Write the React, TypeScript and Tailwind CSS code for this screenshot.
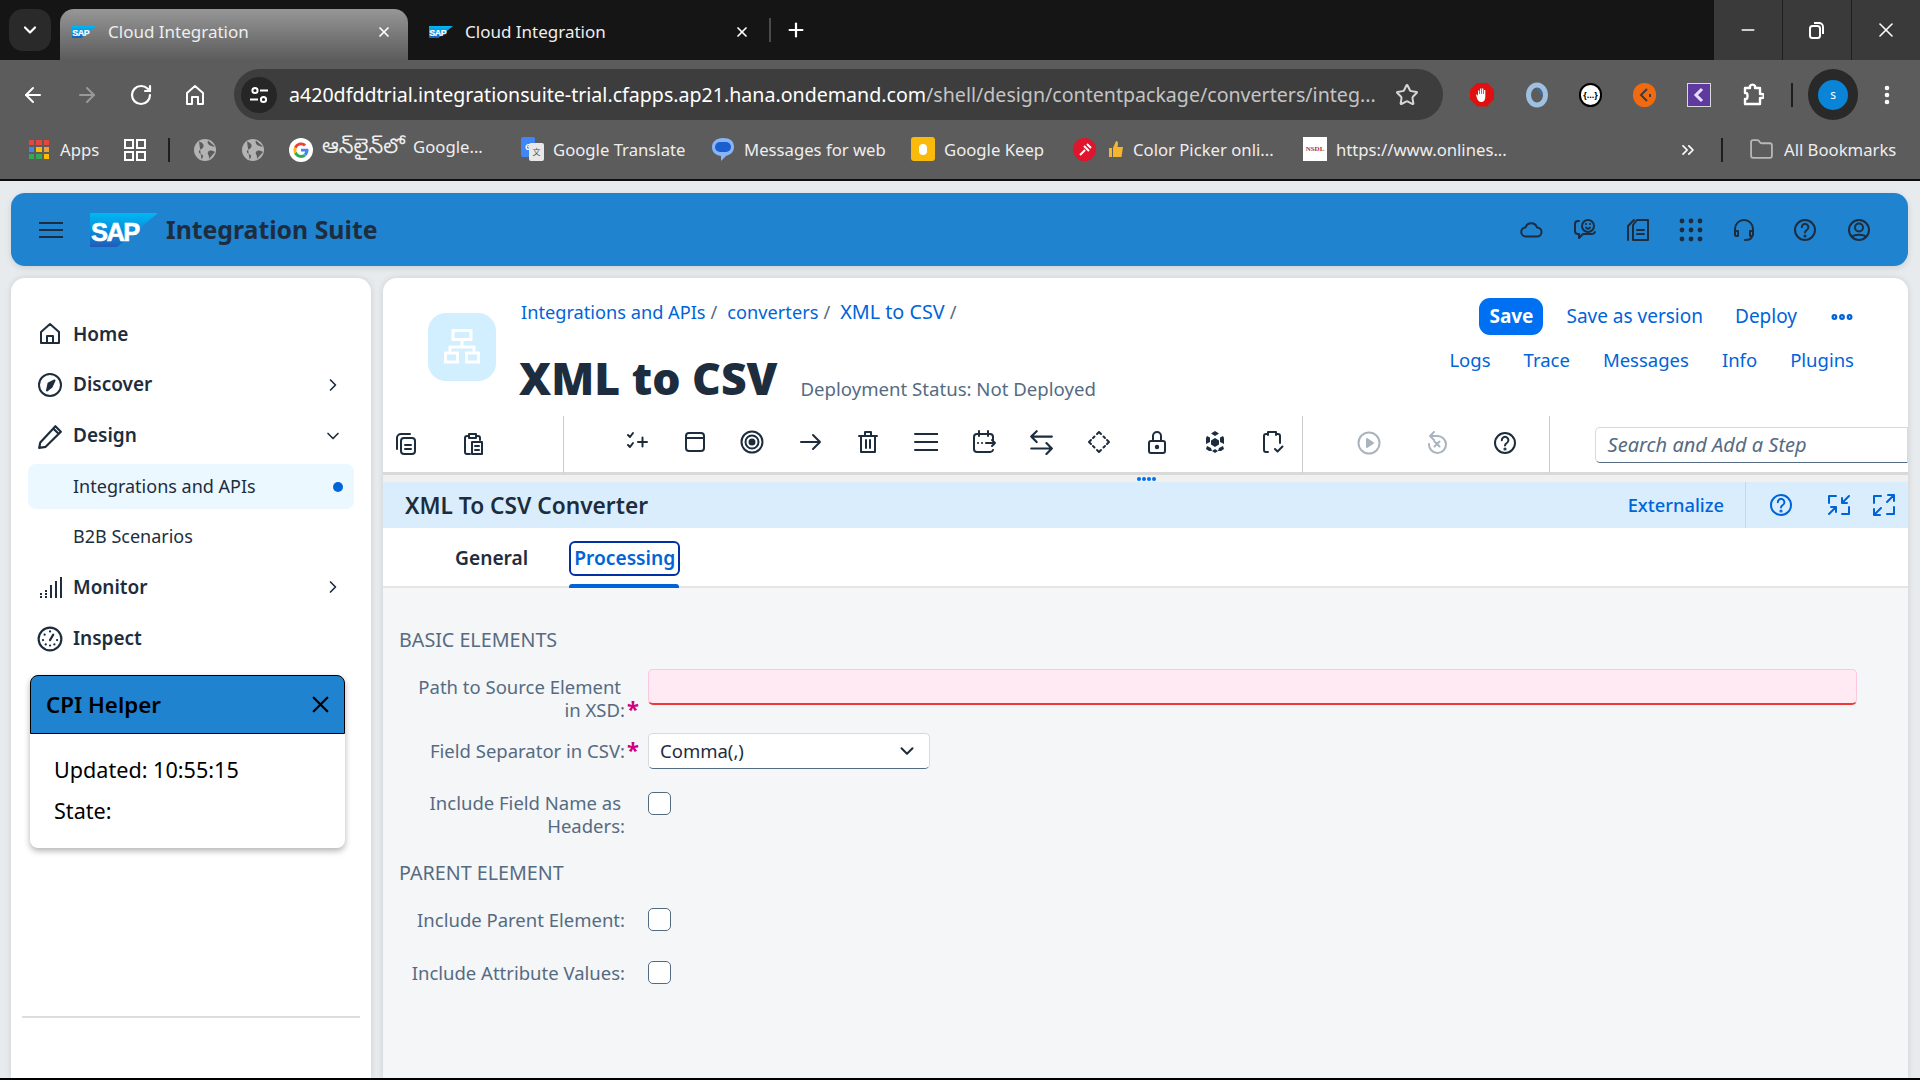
import React from "react";
import { ArrowLeft, ArrowRight, RotateCw, Star, ChevronDown, ChevronRight, X, Plus, Minus, ChevronsRight, Folder, EllipsisVertical, Ellipsis } from "lucide-react";

type P = { c?: string; s?: number; w?: number; children?: React.ReactNode };
const Ic = ({ c = "#1d2d3e", s = 24, w = 2, children }: P) => (
  <svg width={s} height={s} viewBox="0 0 24 24" fill="none" stroke={c} strokeWidth={w} strokeLinecap="round" strokeLinejoin="round" className="shrink-0">{children}</svg>
);

const SapLogo = ({ w = 68, h = 34 }: { w?: number; h?: number }) => (
  <svg width={w} height={h} viewBox="0 0 68 34" className="shrink-0">
    <defs><linearGradient id="sapg" x1="0" y1="0" x2="0" y2="1"><stop offset="0" stopColor="#00b8f1" /><stop offset="0.5" stopColor="#0a8fe0" /><stop offset="1" stopColor="#1e5cb8" /></linearGradient></defs>
    <polygon points="0,0 68,0 27,34 0,34" fill="url(#sapg)" />
    <text x="1" y="28" fontFamily="Liberation Sans" fontWeight="700" fontSize="25.5" letterSpacing="-1.6" fill="#fff" stroke="#fff" strokeWidth="0.6">SAP</text>
  </svg>
);

const Help = ({ c, s = 24 }: { c?: string; s?: number }) => (
  <Ic c={c} s={s}><circle cx="12" cy="12" r="10" /><path d="M8.8 9.2a3.3 3.3 0 1 1 5 2.8c-1.2.8-1.8 1.4-1.8 2.6" /><circle cx="12" cy="18" r=".6" fill={c || "#1d2d3e"} /></Ic>
);

const Tab = ({ active, width }: { active?: boolean; width: string }) => (
  <div className={`flex items-center h-[51px] rounded-t-[14px] pl-3 pb-[6px] ${width} ${active ? "bg-gradient-to-b from-[#979797] to-[#5c5c5c]" : ""}`}>
    <SapLogo w={24} h={12} />
    <span className="ml-3 text-[17px] text-[#eeeeee] flex-1 whitespace-nowrap">Cloud Integration</span>
    <X size={16} color="#fff" strokeWidth={2.6} />
  </div>
);

const Bm = ({ icon, text, w }: { icon: React.ReactNode; text: React.ReactNode; w: string }) => (
  <div className={`flex items-center shrink-0 ${w}`}>
    {icon}
    <span className="ml-[9px] text-[16.7px] text-[#eeeeee] whitespace-nowrap">{text}</span>
  </div>
);

const Globe = () => (
  <svg width="22" height="22" viewBox="0 0 22 22" className="shrink-0">
    <circle cx="11" cy="11" r="11" fill="#b3b3b3" />
    <path d="M5 2.5c3 1 5 2.5 4.5 5S6 10 5 12s2 3 3.5 4-.5 4-1 4.5M14 1.5c-1 2 0 4 2 5s4 1 5 1M21 13c-3-2-6-2-7 0s1 3 1 5 0 2-1 3" fill="#5c5c5c" />
  </svg>
);

function Browser() {
  return (
    <div className="shrink-0">
      <div className="h-[60px] bg-[#151515] flex items-end">
        <div className="w-[42px] h-[42px] ml-[9px] mb-[9px] bg-[#2a2a2a] rounded-[14px] flex items-center justify-center">
          <ChevronDown size={20} color="#fff" strokeWidth={2.6} />
        </div>
        <div className="ml-[9px]"><Tab active width="w-[348px] pr-[16px]" /></div>
        <div className="ml-[9px]"><Tab width="w-[346px] pr-[13px]" /></div>
        <div className="w-[2px] h-[24px] bg-[#4a4a4a] mb-[18px] ml-[6px]" />
        <div className="ml-[14px] mb-[19px]"><Plus size={22} color="#fff" strokeWidth={2.4} /></div>
        <div className="ml-auto w-[206px] h-[60px] bg-[#3a3a3a] flex">
          <div className="flex-1 flex items-center justify-center border-r border-[#1f1f1f]"><Minus size={20} color="#fff" strokeWidth={1.8} /></div>
          <div className="flex-1 flex items-center justify-center border-r border-[#1f1f1f]">
            <svg width="18" height="20" viewBox="0 0 18 20" fill="none" stroke="#fff" strokeWidth="2"><rect x="2" y="6" width="10" height="12" rx="2.5" /><path d="M6 3h5a4 4 0 0 1 4 4v7" /></svg>
          </div>
          <div className="flex-1 flex items-center justify-center"><X size={24} color="#fff" strokeWidth={1.6} /></div>
        </div>
      </div>
      <div className="h-[60px] bg-[#5c5c5c] flex items-end">
        <div className="h-[51px] w-[234px] flex items-center pl-[21px] gap-[30px]">
          <ArrowLeft size={24} color="#fff" strokeWidth={2} />
          <ArrowRight size={24} color="#999" strokeWidth={2} />
          <RotateCw size={24} color="#fff" strokeWidth={2.2} />
          <svg width="24" height="24" viewBox="0 0 24 24" fill="none" stroke="#fff" strokeWidth="2" strokeLinejoin="round"><path d="M4 21V10l8-7 8 7v11h-5v-7H9v7z" /></svg>
        </div>
        <div className="w-[1209px] h-[51px] bg-[#3d3d3d] rounded-full flex items-center pl-[7px] pr-[24px]">
          <div className="w-[36px] h-[36px] rounded-full bg-[#262626] flex items-center justify-center shrink-0">
            <svg width="20" height="20" viewBox="0 0 20 20" fill="none" stroke="#fff" strokeWidth="2"><circle cx="6" cy="5.5" r="2.6" /><path d="M11 5.500h8M1 14.500h8" /><circle cx="14.500" cy="14.500" r="2.600" /></svg>
          </div>
          <span className="ml-3 text-[19.6px] text-white whitespace-nowrap flex-1 min-w-0">a420dfddtrial.integrationsuite-trial.cfapps.ap21.hana.ondemand.com<span className="text-[#c4c4c4]">/shell/design/contentpackage/converters/integ...</span></span>
          <Star size={24} color="#d6d6d6" strokeWidth={2} className="ml-4 shrink-0" />
        </div>
        <div className="flex-1 h-[51px] flex items-center relative">
          <div className="ml-[27px] w-[24px] h-[24px] bg-[#e01010] [clip-path:polygon(30%_0,70%_0,100%_30%,100%_70%,70%_100%,30%_100%,0_70%,0_30%)] flex items-center justify-center">
            <svg width="14" height="16" viewBox="0 0 14 16"><path d="M3 9V3.500h1.300V7h.7V1.500h1.300V7h.7V1.500h1.300V7h.7V3h1.300v7c0 3-1.500 5-4 5-2 0-3-1-4-3L1 8c1-1 1.500 0 2 1z" fill="#fff" /></svg>
          </div>
          <svg className="ml-[31px]" width="24" height="26" viewBox="0 0 24 26" fill="none"><ellipse cx="12" cy="13" rx="8.500" ry="10" stroke="#9fc0e0" strokeWidth="5" /><path d="M12 7c3 0 4.500 3 4 6" stroke="#3a6ea5" strokeWidth="2" /></svg>
          <div className="ml-[30px] w-[23px] h-[24px] rounded-full bg-white border-2 border-black flex items-center justify-center text-[9px] font-bold text-black leading-none">{"{...}"}</div>
          <div className="ml-[31px] w-[23px] h-[24px] rounded-full bg-[#f26a0f] flex items-center justify-center">
            <svg width="14" height="16" viewBox="0 0 14 16" fill="none" stroke="#3d3d3d" strokeWidth="2"><path d="M9 2L3 8l6 6M12 7v3" /></svg>
          </div>
          <div className="ml-[31px] w-[24px] h-[24px] bg-[#5e3a9e] border border-[#d8d8d8] flex items-center justify-center">
            <svg width="14" height="18" viewBox="0 0 14 18" fill="none" stroke="#e8dcff" strokeWidth="3"><path d="M10 3L4 9l6 6" /></svg>
          </div>
          <svg className="ml-[31px]" width="22" height="26" viewBox="0 0 22 26" fill="none" stroke="#fff" strokeWidth="2.400" strokeLinejoin="round"><path d="M3 6h5V4a3 3 0 0 1 5 0v2h5v6h2a2 2 0 0 1 0 4h-2v6H3v-5h1c2 0 2-6 0-6H3z" /></svg>
          <div className="ml-[27px] w-[2px] h-[24px] bg-[#1e1e1e]" />
          <div className="ml-[15px] w-[50px] h-[51px] rounded-full bg-[#292929] flex items-center justify-center">
            <div className="w-[30px] h-[30px] rounded-full bg-[#0a84d6] text-white text-[12px] flex items-center justify-center">s</div>
          </div>
          <EllipsisVertical className="ml-[17px]" size={24} color="#fff" strokeWidth={2.6} />
        </div>
      </div>
      <div className="h-[61px] bg-[#5c5c5c] flex items-center border-b-2 border-[#0d0d0d]">
        <div className="ml-[29px] w-[20px] grid grid-cols-3 gap-[2px] shrink-0">
          {["#e8453c", "#e8453c", "#e8453c", "#4285f4", "#fbbc05", "#e8a33c", "#34a853", "#34a853", "#fbbc05"].map((c, i) => <div key={i} className="h-[5px]" style={{ background: c }} />)}
        </div>
        <span className="ml-[11px] w-[38px] text-[16.7px] text-[#eeeeee]">Apps</span>
        <svg className="ml-[26px]" width="22" height="22" viewBox="0 0 22 22" fill="none" stroke="#fff" strokeWidth="2"><rect x="1" y="1" width="8" height="8" /><rect x="13" y="1" width="8" height="8" /><rect x="1" y="13" width="8" height="8" /><rect x="13" y="13" width="8" height="8" /></svg>
        <div className="ml-[22px] w-[2px] h-[24px] bg-[#1e1e1e]" />
        <div className="ml-[24px]"><Globe /></div>
        <div className="ml-[26px] mr-[25px]"><Globe /></div>
        <Bm w="w-[232px]" text={<><span className="text-[21px] mr-[4px]" style={{ fontFamily: "'Noto Sans Telugu','Noto Sans',sans-serif" }}>ఆన్‌లైన్‌లో</span> Google...</>} icon={
          <svg width="24" height="24" viewBox="0 0 24 24" className="shrink-0"><circle cx="12" cy="12" r="12" fill="#fff" /><path d="M19.500 12.300c0-.6 0-1-.2-1.500H12v2.800h4.200a3.600 3.600 0 0 1-1.500 2.300l2.400 1.900c1.500-1.300 2.400-3.300 2.400-5.500z" fill="#4285f4" /><path d="M12 20c2.100 0 3.900-.7 5.100-1.900l-2.400-1.900c-.7.500-1.600.7-2.700.7-2.100 0-3.800-1.400-4.400-3.200l-2.500 1.900C6.400 18.300 9 20 12 20z" fill="#34a853" /><path d="M7.600 13.700a4.800 4.800 0 0 1 0-3.100L5.100 8.700a8 8 0 0 0 0 7z" fill="#fbbc05" /><path d="M12 7.200c1.200 0 2.200.4 3 1.200l2.200-2.200A8 8 0 0 0 5.100 8.700l2.500 1.900C8.200 8.700 9.900 7.200 12 7.200z" fill="#ea4335" /></svg>
        } />
        <Bm w="w-[190px]" text="Google Translate" icon={
          <div className="relative w-[23px] h-[24px] shrink-0">
            <div className="absolute left-0 top-0 w-[14px] h-[20px] bg-[#4285f4] rounded-[2px] text-white text-[8px] font-bold flex items-center justify-center">G</div>
            <div className="absolute right-0 bottom-0 w-[15px] h-[18px] bg-[#e8e8e8] rounded-[2px] text-[#555] text-[8px] flex items-center justify-center" style={{ fontFamily: "'Noto Sans CJK SC',sans-serif" }}>文</div>
          </div>
        } />
        <Bm w="w-[200px]" text="Messages for web" icon={
          <svg width="24" height="24" viewBox="0 0 24 24" className="shrink-0"><path d="M12 1c7 0 11 3 11 9s-5 8-8 9l-5 5v-5C4 18 1 15 1 10s4-9 11-9z" fill="#8ab4f8" /><rect x="4" y="5" width="16" height="10" rx="5" fill="#1a5fd0" /></svg>
        } />
        <Bm w="w-[162px]" text="Google Keep" icon={
          <div className="w-[24px] h-[24px] bg-[#f9ba0b] rounded-[3px] flex items-center justify-center shrink-0"><div className="w-[8px] h-[11px] rounded-full bg-white" /></div>
        } />
        <div className="mr-[12px] w-[23px] h-[23px] rounded-full bg-[#e0142c] flex items-center justify-center shrink-0">
          <svg width="14" height="14" viewBox="0 0 14 14" fill="none" stroke="#fff" strokeWidth="2"><path d="M2 12l5-5M6 3l5 5M9 1l4 4" /></svg>
        </div>
        <Bm w="w-[195px]" text="Color Picker onli..." icon={
          <svg width="16" height="20" viewBox="0 0 16 20" className="shrink-0"><path d="M1 9h3v9H1zM5 9l3-7c2 0 2 2 2 3l-.5 3H15l-1.500 10H5z" fill="#f5b52e" /></svg>
        } />
        <Bm w="w-[375px]" text="https://www.onlines..." icon={
          <div className="w-[24px] h-[24px] bg-white flex items-center justify-center text-[7px] font-bold text-[#a33] shrink-0" style={{ fontFamily: "'Liberation Serif',serif" }}>NSDL</div>
        } />
        <ChevronsRight size={20} color="#fff" strokeWidth={2} />
        <div className="ml-[23px] w-[2px] h-[24px] bg-[#1e1e1e]" />
        <Folder className="ml-[26px]" size={25} color="#b8b8b8" strokeWidth={1.700} />
        <span className="ml-[10px] text-[16.7px] text-[#eeeeee] whitespace-nowrap">All Bookmarks</span>
      </div>
    </div>
  );
}

const Shell = () => (
  <div className="h-[73px] mx-[11px] mt-[12px] shrink-0 w-[1897px] bg-[#2083cf] rounded-[14px] flex items-center shadow-[0_2px_6px_rgba(0,0,0,0.12)]">
    <svg className="ml-[28px]" width="24" height="18" viewBox="0 0 24 18" stroke="#1d2d3e" strokeWidth="2"><path d="M0 2h24M0 9h24M0 16h24" /></svg>
    <div className="ml-[27px]"><SapLogo /></div>
    <span className="ml-[8px] text-[24.8px] font-bold text-[#1d2d3e] whitespace-nowrap">Integration Suite</span>
    <div className="ml-auto flex items-center">
      <div className="w-[24px] flex justify-center"><Ic s={24}><path d="M7 18.500a4.500 4.500 0 0 1-.5-9A6 6 0 0 1 18 9.500a4.500 4.500 0 0 1 0 9z" /></Ic></div>
      <div className="ml-[30px]"><Ic s={24}><circle cx="15" cy="8" r="6" /><path d="M13 9.500c1 1.500 3 1.500 4 0M13 6h.1M17 6h.1M6 3H5a3 3 0 0 0-3 3v7a3 3 0 0 0 3 3h1v4l4-4h8a4 4 0 0 0 4-2" /></Ic></div>
      <div className="ml-[29px]"><Ic s={24}><path d="M2 22V8l6-6M7 22h15V2H11L7 7zM11 12h7M11 16h7" /></Ic></div>
      <div className="ml-[29px]"><svg width="24" height="24" viewBox="0 0 24 24" fill="#1d2d3e">{[3, 12, 21].flatMap((y) => [3, 12, 21].map((x) => <circle key={x + "-" + y} cx={x} cy={y} r="2.400" />))}</svg></div>
      <div className="ml-[29px]"><Ic s={24}><path d="M3 13V11a9 9 0 0 1 18 0v2M3 13h3v5H4a1 1 0 0 1-1-1zM21 13h-3v5h2a1 1 0 0 0 1-1zM20 18c0 3-3 4-7 4" /></Ic></div>
      <div className="ml-[37px]"><Help /></div>
      <div className="ml-[30px] mr-[37px]"><Ic s={24}><circle cx="12" cy="12" r="10" /><circle cx="12" cy="9.500" r="4" /><path d="M5 19c2-3 12-3 14 0" /></Ic></div>
    </div>
  </div>
);

const NavItem = ({ icon, text, chev, h = "h-[51px]" }: { icon?: React.ReactNode; text: string; chev?: "r" | "d"; h?: string }) => (
  <div className={`flex items-center shrink-0 ${h} pl-[26px] pr-[28px]`}>
    <div className="w-[26px] flex justify-center shrink-0">{icon}</div>
    <span className="ml-[10px] text-[19px] font-semibold text-[#1d2d3e]">{text}</span>
    {chev === "r" && <ChevronRight className="ml-auto" size={20} color="#1d2d3e" strokeWidth={2} />}
    {chev === "d" && <ChevronDown className="ml-auto" size={20} color="#1d2d3e" strokeWidth={2} />}
  </div>
);

function Side() {
  return (
    <div className="w-[360px] h-[800px] shrink-0 bg-white rounded-t-[14px] flex flex-col pt-[31px] shadow-[0_0_6px_rgba(0,0,0,0.12)]">
      <NavItem text="Home" h="h-[50px]" icon={<Ic><path d="M3 21V10l9-8 9 8v11zM9 21v-7h6v7" /></Ic>} />
      <NavItem text="Discover" chev="r" icon={<Ic><circle cx="12" cy="12" r="11" /><path d="M16.500 7.500L13.500 14 9 17.500 10.500 10.500z" fill="#1d2d3e" /></Ic>} />
      <NavItem text="Design" chev="d" h="h-[51px]" icon={<Ic s={26}><path d="M2 23l1-5L17 3l5 5L8 22zM15 5l4 4" /></Ic>} />
      <div className="mt-[3px] mx-[17px] h-[45px] shrink-0 bg-[#ebf8ff] rounded-[8px] flex items-center pl-[45px] pr-[11px]">
        <span className="text-[18px] text-[#1d2d3e]">Integrations and APIs</span>
        <div className="ml-auto w-[10px] h-[10px] rounded-full bg-[#0064d9]" />
      </div>
      <div className="h-[55px] shrink-0 pl-[62px] flex items-center"><span className="text-[18px] text-[#1d2d3e]">B2B Scenarios</span></div>
      <NavItem text="Monitor" chev="r" h="h-[46px]" icon={
        <svg width="24" height="24" viewBox="0 0 24 24" stroke="#1d2d3e" strokeWidth="2" fill="none"><path d="M23 2v21M18 6v17M13 10v13" /><path d="M2 22h2M2 19h2M7 22h2M7 19h2M7 16h2" /></svg>
      } />
      <div className="h-[8px] shrink-0" />
      <NavItem text="Inspect" h="h-[41px]" icon={<Ic s={26}><circle cx="12" cy="12" r="10.500" /><path d="M12 13l3-5M7 8h.1M5.500 13h.1M18.500 13h.1M8 17h.1M12 18h.1M16 17h.1M12 5h.1" /></Ic>} />
      <div className="mt-[16px] mx-[19px] w-[315px] h-[173px] shrink-0 bg-white rounded-[8px] shadow-[0_3px_6px_rgba(0,0,0,0.3)] text-black">
        <div className="h-[59px] bg-[#2083cf] border border-black rounded-t-[8px] flex items-center pl-[15px] pr-[10px] text-[22.3px] font-semibold">
          CPI Helper
          <X className="ml-auto" size={27} color="#000" strokeWidth={2} />
        </div>
        <div className="pl-[24px] pt-[15px] text-[21.6px] leading-[41px]">
          <div>Updated: 10:55:15</div>
          <div>State:</div>
        </div>
      </div>
      <div className="mt-[168px] mx-[11px] h-[2px] bg-[#dddddd] shrink-0" />
    </div>
  );
}

const TB = ({ children, w = "w-[57.8px]" }: { children: React.ReactNode; w?: string }) => (
  <div className={`${w} flex justify-center shrink-0`}>{children}</div>
);
const Gray = "#a9b4be";

function Toolbar() {
  return (
    <div className="h-[59px] flex items-center border-b-[3px] border-[#d9d9d9] shrink-0">
      <div className="ml-[11px] w-[169px] flex items-center h-full gap-[43px]">
        <Ic s={24}><path d="M3 17V6a4 4 0 0 1 4-4h9" /><rect x="7" y="6" width="14" height="16" rx="3" /><path d="M11 13h6M11 17h6" /></Ic>
        <Ic s={24}><path d="M9 22H6a2 2 0 0 1-2-2V6a2 2 0 0 1 2-2h2M8 2h7v4H8zM15 4h2a2 2 0 0 1 2 2v2" /><rect x="11" y="10" width="10" height="12" /><path d="M14 14h4M14 18h4" /></Ic>
      </div>
      <div className="w-px h-[57px] bg-[#cccccc]" />
      <div className="flex items-center ml-[44px] pb-[5px]">
        <TB><Ic s={24}><path d="M3 5l2 2 3-4M3 15l2 2 3-4M13 12h9M17.500 7.500v9" /></Ic></TB>
        <TB><Ic s={24}><rect x="3" y="3" width="18" height="18" rx="3" /><path d="M3 8h18" /></Ic></TB>
        <TB><Ic s={24}><circle cx="12" cy="12" r="10.500" /><circle cx="12" cy="12" r="6.500" /><circle cx="12" cy="12" r="2.500" fill="#1d2d3e" /></Ic></TB>
        <TB><Ic s={24}><path d="M3 12h19M15 5l7 7-7 7" /></Ic></TB>
        <TB><Ic s={24}><path d="M3 6h18M9 6V2h6v4M5 6v16h14V6M10 10v8M14 10v8" /></Ic></TB>
        <TB><Ic s={24}><path d="M1 4h23M1 12h23M1 20h23" /></Ic></TB>
        <TB><Ic s={24}><path d="M21 12V7a3 3 0 0 0-3-3H5a3 3 0 0 0-3 3v12a3 3 0 0 0 3 3h13a3 3 0 0 0 3-2M7 1v5M16 1v5M6 13h.1M10 13h.1M14 13h9M20 10l3 3-3 3" /></Ic></TB>
        <TB><Ic s={26}><path d="M22 7H3M8 2L3 7l5 5M3 18h19M17 13l5 5-5 5" /></Ic></TB>
        <TB><Ic s={24}><path d="M10 4l2-2 2 2M20 10l2 2-2 2M14 20l-2 2-2-2M4 14l-2-2 2-2M6 8l1.500-1.500M16.500 6.500L18 8M18 16l-1.500 1.500M7.500 17.500L6 16" /></Ic></TB>
        <TB><Ic s={24}><rect x="4" y="11" width="16" height="12" rx="2" /><path d="M8 11V6a4 4 0 0 1 8 0v5" /><circle cx="12" cy="17" r="1.200" fill="#1d2d3e" /></Ic></TB>
        <TB><svg width="24" height="24" viewBox="0 0 24 24" fill="#1d2d3e"><path d="M12 1l4 2.500-4 2.500-4-2.500zM4 6l3 1.500V12l-4 2V8zM20 6l-3 1.500V12l4 2V8zM12 8l4 2.500v4L12 17l-4-2.500v-4zM4 16l4 2 1 3-3 0-3-2zM20 16l-4 2-1 3 3 0 3-2zM12 19l3 2-3 2-3-2z" /></svg></TB>
        <TB><Ic s={24}><path d="M7 22H5a2 2 0 0 1-2-2V6a2 2 0 0 1 2-2h2M7 5V2h8v3M15 4h2a2 2 0 0 1 2 2v7M14 19l2.500 2.500 5-5" /></Ic></TB>
      </div>
      <div className="w-px h-[57px] bg-[#cccccc]" />
      <div className="flex items-center ml-[37px] pb-[2px]">
        <TB w="w-[58px]"><Ic c={Gray} s={24}><circle cx="12" cy="12" r="10.500" /><path d="M10 8l6 4-6 4z" fill={Gray} /></Ic></TB>
        <TB w="w-[78px]"><Ic c={Gray} s={24}><path d="M9 1L5 5l4 4M5 5h7a8.500 8.500 0 1 1-8 8M9.500 10.500l5 5M14.500 10.500l-5 5" /></Ic></TB>
        <TB w="w-[58px]"><Help s={24} /></TB>
      </div>
      <div className="ml-[15px] w-px h-[57px] bg-[#cccccc]" />
      <div className="ml-[45px] mt-[2px] flex-1 h-[36px] bg-white border border-[#d5dadd] border-b-[#556b82] rounded-l-[5px] flex items-center pl-[12px] text-[20px] italic text-[#556b82]">Search and Add a Step</div>
    </div>
  );
}

const Label = ({ children, req }: { children: React.ReactNode; req?: boolean }) => (
  <div className="w-[249px] shrink-0 pr-[23px] text-right text-[18.500px] leading-[23px] text-[#556b82]">
    {children}{req ? <span className="text-[#d0007e] font-bold text-[22px] leading-[20px] absolute ml-[2px]">*</span> : null}
  </div>
);
const Check = () => <div className="w-[23px] h-[23px] rounded-[5px] bg-white border border-[#556b82]" />;
const Link = ({ children, cls }: { children: React.ReactNode; cls?: string }) => <span className={`text-[#0064d9] whitespace-nowrap ${cls || ""}`}>{children}</span>;

function Main() {
  return (
    <div className="w-[1525px] h-[800px] shrink-0 bg-white rounded-t-[14px] flex flex-col overflow-hidden shadow-[0_0_6px_rgba(0,0,0,0.12)]">
      <div className="h-[138px] flex relative shrink-0">
        <div className="ml-[45px] mt-[35px] w-[68px] h-[68px] rounded-[18px] bg-[#d1efff] flex items-center justify-center">
          <svg width="36" height="36" viewBox="0 0 36 36" fill="none" stroke="#fff" strokeWidth="3"><rect x="9" y="1.500" width="18" height="9" /><path d="M18 11v7M6 24v-6h24v6" /><rect x="1.500" y="24" width="12" height="9" /><rect x="22.500" y="24" width="12" height="9" /></svg>
        </div>
        <div className="ml-[25px] flex flex-col">
          <div className="mt-[21px] flex text-[18.2px] text-[#556b82] leading-[26px] whitespace-nowrap">
            <Link>Integrations and APIs</Link><span className="ml-[5px]">/</span>
            <Link cls="ml-[10px]">converters</Link><span className="ml-[5px]">/</span>
            <Link cls="ml-[10px] text-[19.8px]">XML to CSV</Link><span className="ml-[5px]">/</span>
          </div>
          <div className="mt-[24px] flex items-end whitespace-nowrap">
            <span className="text-[44.5px] font-black leading-[58px] text-[#1d2d3e] ml-[-2px]">XML to CSV</span>
            <span className="ml-[23px] text-[18.6px] leading-[26px] mb-[5px] text-[#556b82]">Deployment Status: Not Deployed</span>
          </div>
        </div>
        <div className="ml-auto pr-[54px] pt-[20px] flex flex-col items-end text-[18.500px]">
          <div className="flex items-center h-[37px] text-[19px]">
            <div className="w-[64px] h-[37px] rounded-[11px] bg-[#0070f2] text-white font-bold flex items-center justify-center">Save</div>
            <Link cls="ml-[23px]">Save as version</Link>
            <Link cls="ml-[32px]">Deploy</Link>
            <Ellipsis className="ml-[32px] mr-[-1px]" size={26} color="#0064d9" strokeWidth={3.400} />
          </div>
          <div className="flex items-center mt-[12px] h-[26px]">
            <Link>Logs</Link><Link cls="ml-[33px]">Trace</Link><Link cls="ml-[33px]">Messages</Link><Link cls="ml-[33px]">Info</Link><Link cls="ml-[33px]">Plugins</Link>
          </div>
        </div>
      </div>
      <Toolbar />
      <div className="h-[7px] bg-[#f0f0f0] relative shrink-0 flex justify-center">
        <div className="absolute left-[754px] top-[2px] flex gap-[1px]">
          {[0, 1, 2, 3].map((i) => <div key={i} className="w-[4px] h-[4px] rounded-full bg-[#0070f2]" />)}
        </div>
      </div>
      <div className="h-[46px] bg-[#d9edfd] flex items-center pl-[22px] shrink-0">
        <span className="text-[22.7px] font-semibold text-[#1d2d3e] pt-[2px]">XML To CSV Converter</span>
        <div className="ml-auto flex items-center">
          <Link cls="text-[18.3px] font-medium">Externalize</Link>
          <div className="ml-[21px] w-px h-[46px] bg-[#c5d8e8]" />
          <div className="ml-[23px]"><Help c="#0064d9" s={24} /></div>
          <div className="ml-[34px]"><Ic c="#0064d9" s={24}><path d="M2 10V3h7M22 14v7h-7M22 3l-7 7M15 5v5h5M2 21l7-7M9 19v-5H4" /></Ic></div>
          <div className="ml-[21px] mr-[12px]"><Ic c="#0064d9" s={24}><path d="M2 10V3h7M22 14v7h-7M22 2l-7 7M16 2h6v6M2 22l7-7M2 16v6h6" /></Ic></div>
        </div>
      </div>
      <div className="h-[60px] bg-white border-b-2 border-[#e5e5e5] flex shrink-0 relative pl-[72px]">
        <span className="text-[19.2px] font-semibold text-[#1d2d3e] leading-[60px]">General</span>
        <div className="ml-[41px] relative h-full">
          <div className="mt-[13px] h-[35px] w-[111px] rounded-[6px] border-2 border-[#0032a5] flex items-center justify-center text-[19.2px] font-semibold text-[#0064d9]">Processing</div>
          <div className="absolute left-0 bottom-[-2px] w-[110px] h-[4px] bg-[#0064d9] rounded-t-[3px]" />
        </div>
      </div>
      <div className="flex-1 bg-[#f5f6f7] pl-[16px] pr-[51px]">
        <div className="mt-[39px] h-[26px] leading-[26px] text-[19.7px] text-[#556b82]">BASIC ELEMENTS</div>
        <div className="mt-[16px] flex items-start relative">
          <div className="pt-[6px] pb-[1px]"><Label req><span className="pr-[4px]">Path to Source Element</span><br />in XSD:</Label></div>
          <div className="flex-1 h-[36px] bg-[#ffeaf4] border border-[#fbc8dd] border-b-2 border-b-[#ee3939] rounded-[5px]" />
        </div>
        <div className="mt-[11px] flex items-center">
          <div className="pb-[2px]"><Label req>Field Separator in CSV:</Label></div>
          <div className="w-[282px] h-[36px] bg-white border border-[#d5dadd] border-b-[#556b82] rounded-[5px] flex items-center pl-[11px] pr-[11px] text-[18.500px] text-[#1d2d3e]">
            Comma(,)
            <ChevronDown className="ml-auto" size={22} color="#1d2d3e" strokeWidth={2.200} />
          </div>
        </div>
        <div className="mt-[23px] flex items-start">
          <div className="mt-[-1px]"><Label><span className="pr-[4px]">Include Field Name as</span><br />Headers:</Label></div>
          <Check />
        </div>
        <div className="mt-[23px] h-[26px] leading-[26px] text-[19.7px] text-[#556b82]">PARENT ELEMENT</div>
        <div className="mt-[22px] flex items-center h-[23px]">
          <Label>Include Parent Element:</Label>
          <Check />
        </div>
        <div className="mt-[30px] flex items-center h-[23px]">
          <Label>Include Attribute Values:</Label>
          <Check />
        </div>
      </div>
    </div>
  );
}

export default function App() {
  return (
    <div className="w-[1920px] h-[1080px] overflow-hidden bg-[#e8ebee] flex flex-col relative" style={{ fontFamily: "'Noto Sans',sans-serif" }}>
      <Browser />
      <Shell />
      <div className="flex gap-[12px] ml-[11px] mt-[12px]">
        <Side />
        <Main />
      </div>
      <div className="absolute left-0 bottom-0 w-full h-[2px] bg-black" />
    </div>
  );
}
